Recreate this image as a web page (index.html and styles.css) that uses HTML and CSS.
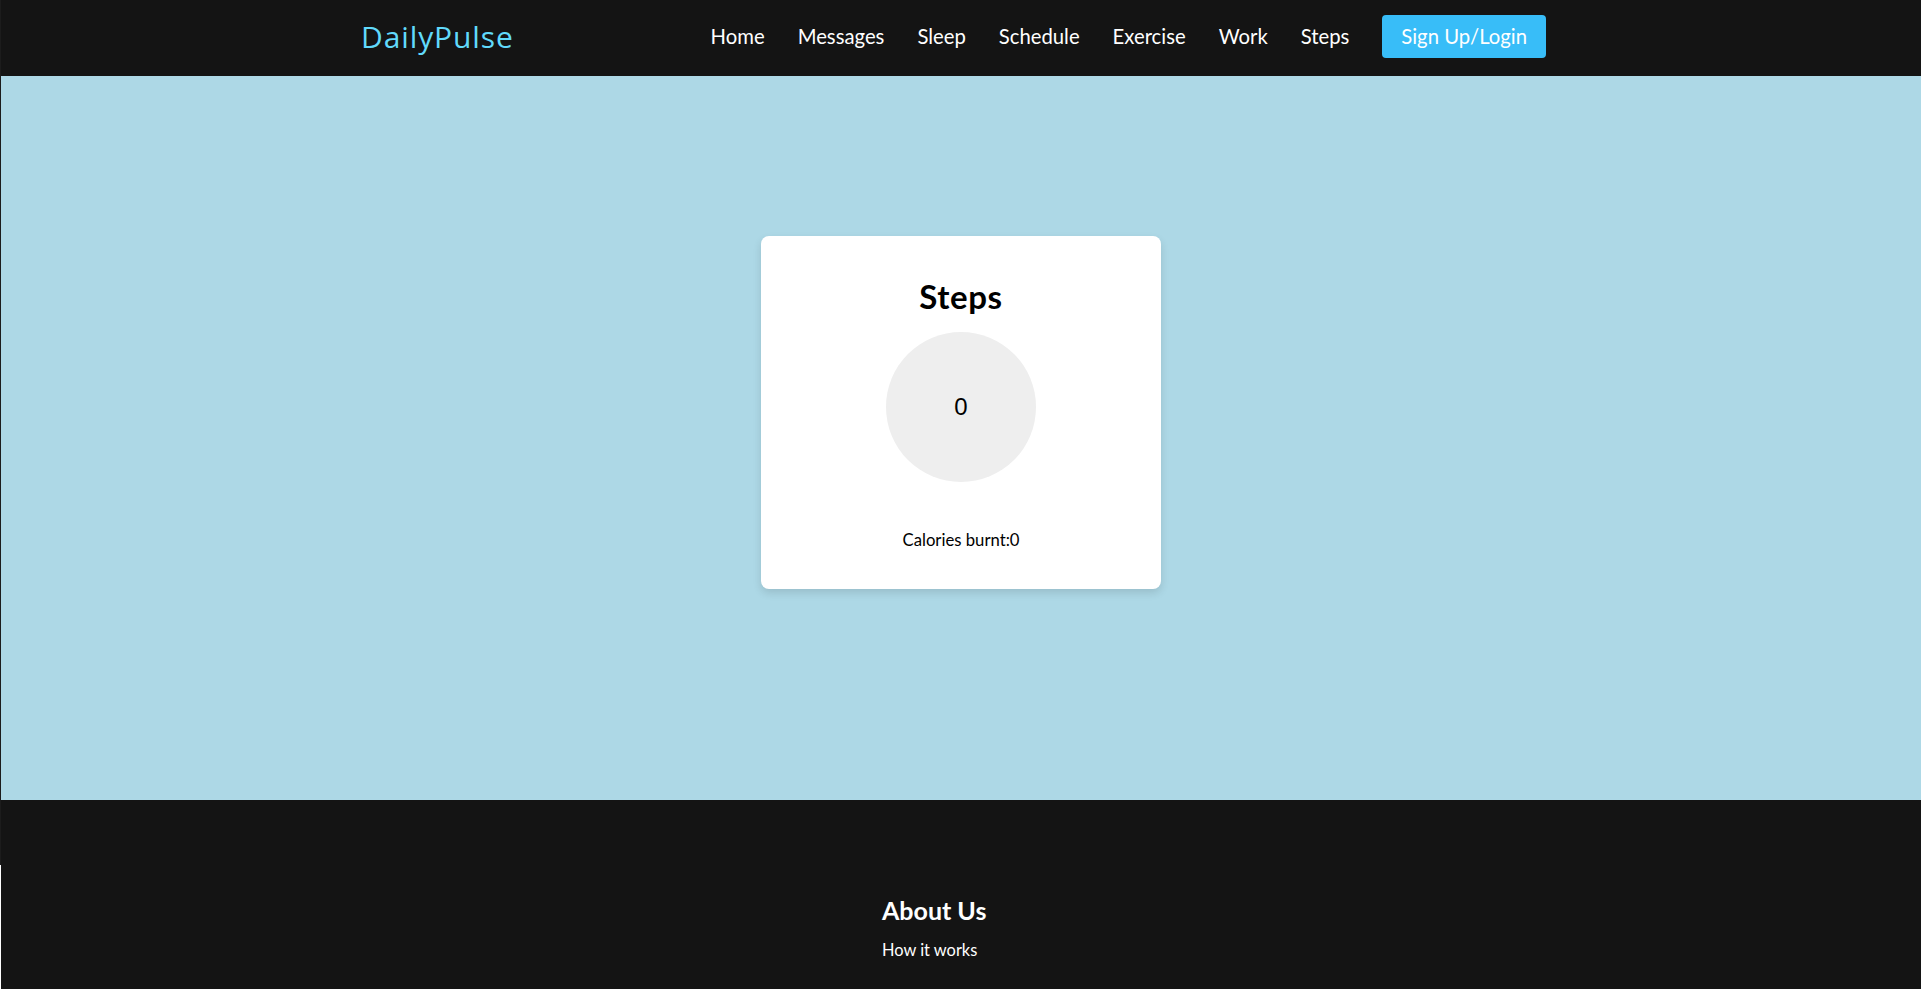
FILE: index.html
```html
<!DOCTYPE html>
<html lang="en">
<head>
<meta charset="utf-8">
<title>DailyPulse</title>
<link rel="stylesheet" href="styles.css">
</head>
<body>
<div class="page">
  <header class="topbar">
    <div class="container">
      <a class="logo" href="#">DailyPulse</a>
      <nav class="nav">
        <a class="nav-link" href="#">Home</a>
        <a class="nav-link" href="#">Messages</a>
        <a class="nav-link" href="#">Sleep</a>
        <a class="nav-link" href="#">Schedule</a>
        <a class="nav-link" href="#">Exercise</a>
        <a class="nav-link" href="#">Work</a>
        <a class="nav-link" href="#">Steps</a>
        <a class="btn" href="#">Sign Up/Login</a>
      </nav>
    </div>
  </header>
  <main class="hero">
    <div class="card">
      <h2 class="card-title">Steps</h2>
      <div class="circle"><span class="count">0</span></div>
      <p class="calories">Calories burnt:0</p>
    </div>
  </main>
  <div class="band"></div>
</div>
<footer class="footer">
  <div class="footer-col">
    <h3 class="footer-title">About Us</h3>
    <a class="footer-link" href="#">How it works</a>
  </div>
</footer>
</body>
</html>
```

FILE: styles.css
```css
* { box-sizing: border-box; }
html, body { margin: 0; padding: 0; }
body {
  background: #ffffff;
  font-family: "Lato", "Open Sans", sans-serif;
  color: #000;
}
.page {
  border-left: 1px solid #1c1c1c;
}
.topbar {
  background: #141414;
  height: 76px;
}
.container {
  width: 1200px;
  margin: 0 auto;
  height: 100%;
  display: flex;
  align-items: center;
  justify-content: space-between;
  padding-right: 15px;
  padding-bottom: 4px;
}
.logo {
  color: #61dafb;
  font-family: "Open Sans", "Lato", sans-serif;
  font-size: 30px;
  letter-spacing: 0.9px;
  text-decoration: none;
}
.nav {
  display: flex;
  align-items: center;
  gap: 33px;
}
.nav-link {
  color: #ffffff;
  text-decoration: none;
  font-size: 20.3px;
}
.btn {
  background: #38bdf8;
  color: #ffffff;
  text-decoration: none;
  font-size: 20.3px;
  height: 43px;
  padding: 0 19px;
  border-radius: 4px;
  display: flex;
  align-items: center;
}
.hero {
  background: #add8e6;
  padding: 160px 0 211px;
  display: flex;
  justify-content: center;
}
.card {
  width: 400px;
  height: 353px;
  background: #fff;
  border-radius: 8px;
  box-shadow: 0 4px 8px rgba(0, 0, 0, 0.12);
  display: flex;
  flex-direction: column;
  align-items: center;
  padding-top: 40px;
}
.card-title {
  margin: 0;
  font-size: 33px;
  letter-spacing: 0.6px;
  font-weight: 700;
  line-height: 40px;
}
.circle {
  margin-top: 16px;
  width: 150px;
  height: 150px;
  border-radius: 50%;
  background: #eeeeee;
  display: flex;
  align-items: center;
  justify-content: center;
}
.count {
  font-family: "Liberation Sans", Arial, sans-serif;
  font-size: 24px;
}
.calories {
  margin: 48px 0 0;
  font-size: 16.7px;
  line-height: 20px;
}
.band {
  background: #141414;
  height: 65px;
}
.footer {
  background: #141414;
  margin-left: 1px;
  padding: 30px 0 30px;
  display: flex;
  justify-content: center;
}
.footer-col {
  width: 158px;
  display: flex;
  flex-direction: column;
}
.footer-title {
  color: #fff;
  margin: 0;
  font-size: 25px;
  font-weight: 700;
  line-height: 30px;
}
.footer-link {
  margin-top: 15px;
  color: #fff;
  text-decoration: none;
  font-size: 16.4px;
}
```
